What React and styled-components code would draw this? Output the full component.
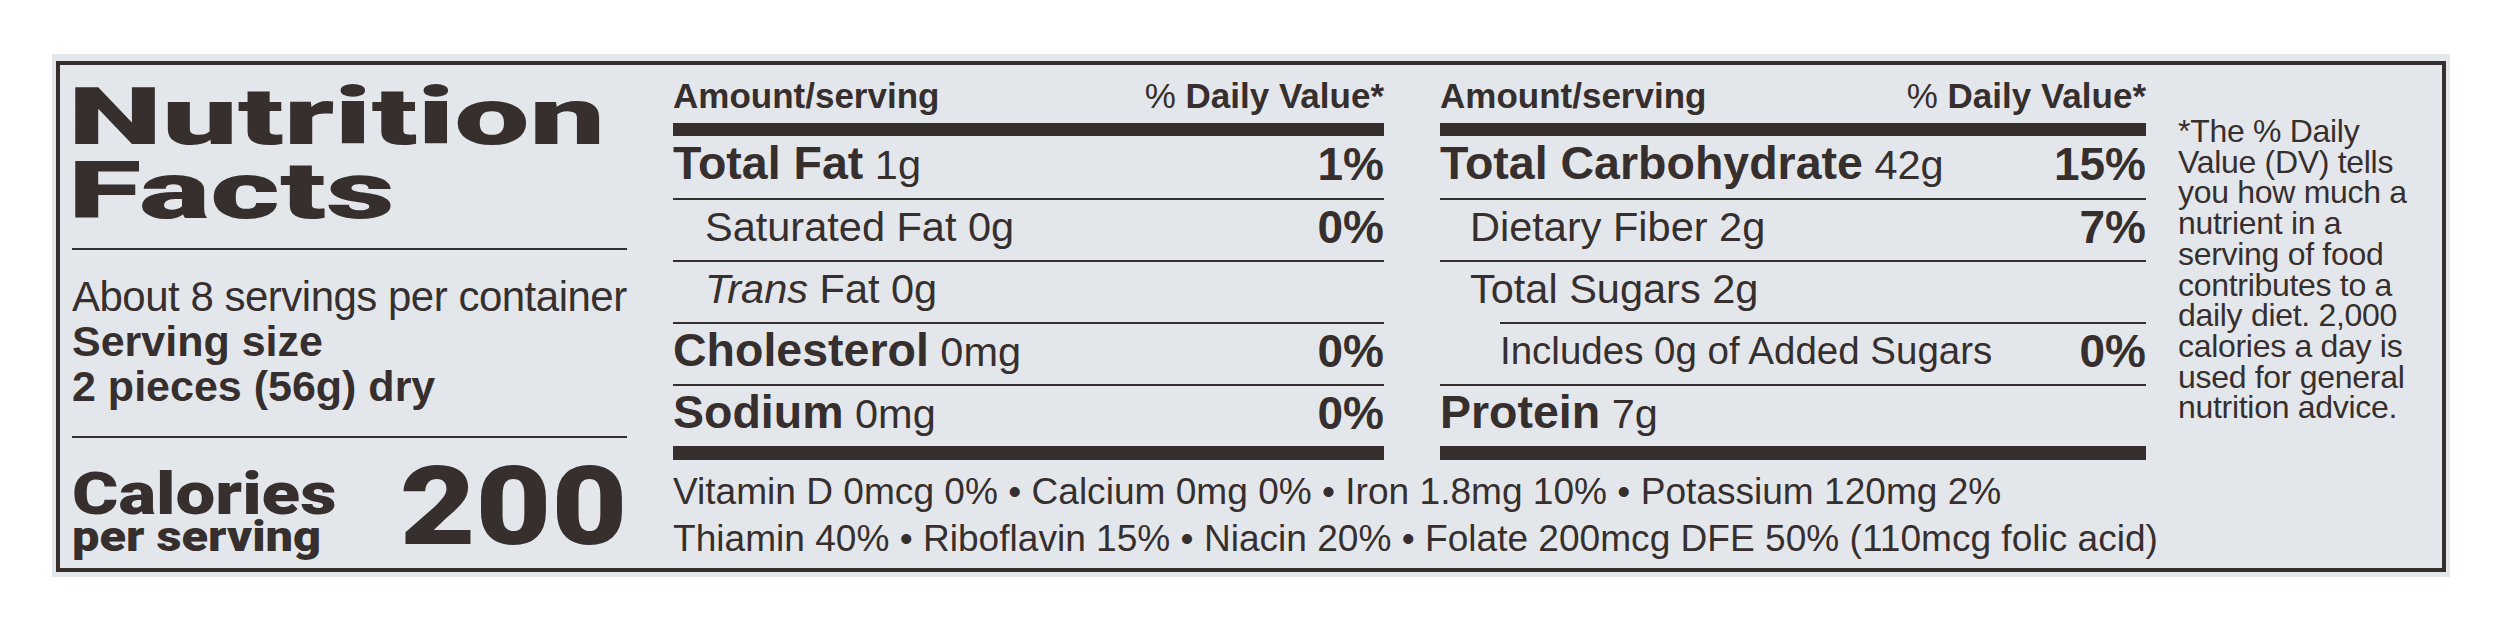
import styled, { createGlobalStyle } from 'styled-components'

const ink = '#372f2e'

const GlobalStyle = createGlobalStyle`
  html, body {
    margin: 0;
    padding: 0;
    background: #ffffff;
  }
  body {
    font-family: "Liberation Sans", Arial, sans-serif;
    color: ${ink};
  }
`

const Page = styled.div`
  padding: 54px 0 0 52px;
`

const Sheet = styled.div`
  width: 2398px;
  box-sizing: border-box;
  padding: 7px 4px 5px 4px;
  background: #e3e7eb;
`

const Label = styled.section`
  display: flex;
  height: 511px;
  box-sizing: border-box;
  border: 4px solid ${ink};
`

const LeftPanel = styled.div`
  width: 555px;
  padding-left: 12px;
  display: flex;
  flex-direction: column;
`

const Heavy = styled.div`
  font-family: Roboto, "Liberation Sans", sans-serif;
  font-weight: 900;
  width: max-content;
  transform: scaleX(${(p) => p.$stretch || 1.2});
  transform-origin: ${(p) => (p.$right ? 'right' : 'left')} bottom;
`

const Title = styled(Heavy)`
  margin: 15px 0 0 -4px;
  font-size: 80px;
  line-height: 74px;
`

const Rule = styled.div`
  height: 2px;
  background: ${ink};
  margin-top: ${(p) => p.$top}px;
`

const ServingInfo = styled.div`
  margin-top: 24px;
  font-size: 42px;
  line-height: 45px;
`

const Servings = styled.div`
  letter-spacing: -0.5px;
`

const ServingSize = styled.div`
  font-size: 43px;
  font-weight: 700;
`

const CaloriesRow = styled.div`
  margin-top: 29px;
  display: flex;
  justify-content: space-between;
  align-items: flex-end;
`

const CaloriesLabel = styled(Heavy)`
  font-size: 59px;
  line-height: 50px;
`

const PerServing = styled(Heavy)`
  font-size: 42px;
  line-height: 35px;
  margin-bottom: -10px;
`

const CaloriesValue = styled(Heavy)`
  font-size: 110px;
  line-height: 80px;
  margin-bottom: -3px;
`

const RightArea = styled.div`
  flex: 1;
  padding: 14px 0 0 46px;
  display: flex;
  flex-direction: column;
`

const TopRow = styled.div`
  display: flex;
`

const Column = styled.div`
  width: ${(p) => p.$width}px;
  margin-right: ${(p) => p.$gap}px;
  display: flex;
  flex-direction: column;
`

const HeaderRow = styled.div`
  height: 44px;
  display: flex;
  justify-content: space-between;
  align-items: flex-start;
  font-size: 35px;
  line-height: 34px;
  font-weight: 700;
`

const Light = styled.span`
  font-weight: 400;
`

const ThickBar = styled.div`
  height: ${(p) => p.$h}px;
  background: ${ink};
`

const Row = styled.div`
  height: 62px;
  box-sizing: border-box;
  display: flex;
  justify-content: space-between;
  align-items: center;
  padding: 0 0 6px ${(p) => p.$indent || 0}px;
  margin-left: ${(p) => p.$inset || 0}px;
  border-top: ${(p) => (p.$first ? 'none' : `2px solid ${ink}`)};
  line-height: 44px;
`

const Name = styled.span`
  font-size: ${(p) => p.$size || 41.5}px;
  & b {
    font-size: 46.5px;
    font-weight: 700;
  }
  & i {
    font-style: italic;
  }
`

const Percent = styled.span`
  font-size: 46px;
  font-weight: 700;
`

const Footnote = styled.p`
  flex: 1;
  margin: 37px 0 0 7px;
  font-size: 32px;
  line-height: 30.7px;
  letter-spacing: -0.3px;
`

const Micros = styled.div`
  margin-top: 8px;
  font-size: 37.1px;
  line-height: 47px;
`

const colA = [
  { bold: 'Total Fat', amount: '1g', dv: '1%' },
  { name: 'Saturated Fat 0g', dv: '0%', indent: 32 },
  { trans: true, indent: 32 },
  { bold: 'Cholesterol', amount: '0mg', dv: '0%' },
  { bold: 'Sodium', amount: '0mg', dv: '0%' },
]

const colB = [
  { bold: 'Total Carbohydrate', amount: '42g', dv: '15%' },
  { name: 'Dietary Fiber 2g', dv: '7%', indent: 30 },
  { name: 'Total Sugars 2g', indent: 30 },
  { name: 'Includes 0g of Added Sugars', dv: '0%', inset: 60, size: 38.5 },
  { bold: 'Protein', amount: '7g' },
]

const footnote = [
  '*The % Daily',
  'Value (DV) tells',
  'you how much a',
  'nutrient in a',
  'serving of food',
  'contributes to a',
  'daily diet. 2,000',
  'calories a day is',
  'used for general',
  'nutrition advice.',
]

function NutrientColumn({ rows, width, gap }) {
  return (
    <Column $width={width} $gap={gap}>
      <HeaderRow>
        <span>Amount/serving</span>
        <span>
          <Light>%</Light> Daily Value*
        </span>
      </HeaderRow>
      <ThickBar $h={13} />
      {rows.map((row, index) => (
        <Row
          key={index}
          $first={index === 0}
          $indent={row.indent}
          $inset={row.inset}
        >
          <Name $size={row.size}>
            {row.bold && (
              <>
                <b>{row.bold}</b> {row.amount}
              </>
            )}
            {row.name}
            {row.trans && (
              <>
                <i>Trans</i> Fat 0g
              </>
            )}
          </Name>
          {row.dv && <Percent>{row.dv}</Percent>}
        </Row>
      ))}
      <ThickBar $h={14} />
    </Column>
  )
}

export default function App() {
  return (
    <Page>
      <GlobalStyle />
      <Sheet>
        <Label>
          <LeftPanel>
            <Title $stretch={1.675}>
              Nutrition
              <br />
              Facts
            </Title>
            <Rule $top={20} />
            <ServingInfo>
              <Servings>About 8 servings per container</Servings>
              <ServingSize>Serving size</ServingSize>
              <ServingSize>2 pieces (56g) dry</ServingSize>
            </ServingInfo>
            <Rule $top={27} />
            <CaloriesRow>
              <div>
                <CaloriesLabel $stretch={1.2}>Calories</CaloriesLabel>
                <PerServing $stretch={1.16}>per serving</PerServing>
              </div>
              <CaloriesValue $stretch={1.19} $right>
                200
              </CaloriesValue>
            </CaloriesRow>
          </LeftPanel>
          <RightArea>
            <TopRow>
              <NutrientColumn rows={colA} width={711} gap={56} />
              <NutrientColumn rows={colB} width={706} gap={25} />
              <Footnote>
                {footnote.map((line) => (
                  <span key={line}>
                    {line}
                    <br />
                  </span>
                ))}
              </Footnote>
            </TopRow>
            <Micros>
              <div>
                Vitamin D 0mcg 0% • Calcium 0mg 0% • Iron 1.8mg 10% • Potassium
                120mg 2%
              </div>
              <div>
                Thiamin 40% • Riboflavin 15% • Niacin 20% • Folate 200mcg DFE
                50% (110mcg folic acid)
              </div>
            </Micros>
          </RightArea>
        </Label>
      </Sheet>
    </Page>
  )
}
